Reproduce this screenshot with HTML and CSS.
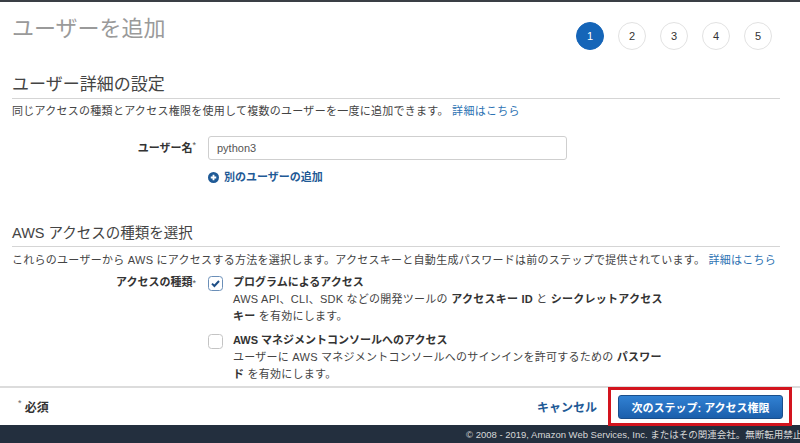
FILE: index.html
```html
<!DOCTYPE html>
<html lang="ja">
<head>
<meta charset="utf-8">
<title>ユーザーを追加</title>
<link rel="stylesheet" href="styles.css">
</head>
<body>
<div class="app">
  <div class="topbar"></div>
  <main class="main">
    <header class="header">
      <h1 class="title">ユーザーを追加</h1>
      <ol class="steps">
        <li class="step active">1</li>
        <li class="step">2</li>
        <li class="step">3</li>
        <li class="step">4</li>
        <li class="step">5</li>
      </ol>
    </header>

    <h2 class="section-title first">ユーザー詳細の設定</h2>
    <p class="desc">同じアクセスの種類とアクセス権限を使用して複数のユーザーを一度に追加できます。 <a class="link" href="#">詳細はこちら</a></p>

    <div class="form-row">
      <label class="label">ユーザー名<span class="req">*</span></label>
      <input class="input" type="text" value="python3">
    </div>
    <div class="add-user">
      <a class="add-link" href="#">
        <svg class="plus" viewBox="0 0 12 12" width="11" height="11"><circle cx="6" cy="6" r="6" fill="#1f5a96"/><path d="M6 3v6M3 6h6" stroke="#fff" stroke-width="2"/></svg>
        別のユーザーの追加
      </a>
    </div>

    <h2 class="section-title second">AWS アクセスの種類を選択</h2>
    <p class="desc desc2">これらのユーザーから AWS にアクセスする方法を選択します。アクセスキーと自動生成パスワードは前のステップで提供されています。 <a class="link" href="#">詳細はこちら</a></p>

    <div class="access-row">
      <div class="label label-access">アクセスの種類<span class="req">*</span></div>
      <div class="options">
        <div class="option">
          <span class="checkbox checked">
            <svg viewBox="0 0 15 15" width="15" height="15"><rect x="0.5" y="0.5" width="14" height="14" rx="3" fill="#fff" stroke="#6b8fb8"/><path d="M4 7.6l2.4 2.4 4.6-5" fill="none" stroke="#1f4f86" stroke-width="2"/></svg>
          </span>
          <div class="option-text">
            <div class="option-title">プログラムによるアクセス</div>
            <div class="option-desc">AWS API、CLI、SDK などの開発ツールの <b>アクセスキー ID</b> と <b>シークレットアクセス<br>キー</b> を有効にします。</div>
          </div>
        </div>
        <div class="option second-opt">
          <span class="checkbox">
            <svg viewBox="0 0 15 15" width="15" height="15"><rect x="0.5" y="0.5" width="14" height="14" rx="3" fill="#fff" stroke="#c4c4c4"/></svg>
          </span>
          <div class="option-text">
            <div class="option-title">AWS マネジメントコンソールへのアクセス</div>
            <div class="option-desc">ユーザーに AWS マネジメントコンソールへのサインインを許可するための <b>パスワー<br>ド</b> を有効にします。</div>
          </div>
        </div>
      </div>
    </div>
  </main>

  <footer class="actions">
    <div class="required"><span class="star">*</span> 必須</div>
    <div class="buttons">
      <a class="cancel" href="#">キャンセル</a>
      <span class="highlight">
        <button class="primary" type="button">次のステップ: アクセス権限</button>
      </span>
    </div>
  </footer>
  <div class="copyright">© 2008 - 2019, Amazon Web Services, Inc. またはその関連会社。無断転用禁止。</div>
</div>
</body>
</html>
```

FILE: styles.css
```css
* { box-sizing: border-box; }
html, body { margin: 0; padding: 0; }
body {
  font-family: "Liberation Sans", "Noto Sans CJK JP", sans-serif;
  font-size: 11px;
  color: #444;
  background: #fff;
}
.app {
  width: 800px;
  height: 443px;
  display: flex;
  flex-direction: column;
  overflow: hidden;
}
.topbar { height: 2px; background: #3a3f45; flex: none; }
.main {
  flex: 1;
  overflow: hidden;
  padding: 0 20px 0 12px;
}
.header {
  display: flex;
  justify-content: space-between;
  align-items: flex-start;
  height: 48px;
}
.title {
  margin: 14px 0 0;
  font-size: 22px;
  line-height: 26px;
  font-weight: 400;
  color: #9a9a9a;
}
.steps {
  list-style: none;
  margin: 20px 8px 0 0;
  padding: 0;
  display: flex;
  gap: 14px;
}
.step {
  width: 28px;
  height: 28px;
  border-radius: 50%;
  border: 1px solid #e2e2e2;
  display: flex;
  align-items: center;
  justify-content: center;
  font-size: 11px;
  color: #333;
  background: #fff;
}
.step.active {
  background: #1565b8;
  border-color: #1565b8;
  color: #fff;
}
.section-title {
  margin: 0;
  font-size: 17px;
  line-height: 20px;
  font-weight: 400;
  color: #444;
  padding-bottom: 3px;
  border-bottom: 1px solid #d5d5d5;
}
.section-title.first { margin-top: 25px; }
.section-title.second { margin-top: 36px; font-size: 14.5px; }
.desc {
  margin: 4px 0 0;
  line-height: 16px;
  white-space: nowrap;
  letter-spacing: 0.27px;
}
.desc2 { margin-top: 5px; }
.link { color: #2e73b3; text-decoration: none; }
.form-row {
  display: flex;
  align-items: center;
  gap: 12px;
  margin-top: 17px;
}
.label {
  width: 184px;
  flex: none;
  text-align: right;
  font-weight: 700;
  color: #333;
  line-height: 24px;
}
.req { font-weight: 400; font-size: 9px; vertical-align: top; line-height: 18px; color: #555; }
.input {
  width: 359px;
  height: 24px;
  border: 1px solid #cfcfcf;
  border-radius: 3px;
  padding: 0 8px;
  font-family: "Liberation Sans", "Noto Sans CJK JP", sans-serif;
  font-size: 11px;
  color: #555;
}
.add-user {
  margin-top: 9px;
  padding-left: 196px;
  line-height: 16px;
}
.add-link {
  color: #1f5a96;
  font-weight: 700;
  text-decoration: none;
  display: inline-flex;
  align-items: center;
  gap: 5px;
}
.plus { display: block; }
.access-row {
  display: flex;
  gap: 12px;
  margin-top: 6px;
}
.label-access { line-height: 17px; }
.options { display: flex; flex-direction: column; }
.option { display: flex; gap: 10px; }
.option.second-opt { margin-top: 7px; }
.checkbox { display: block; margin-top: 2px; height: 15px; flex: none; }
.checkbox svg { display: block; }
.option-text { line-height: 17px; white-space: nowrap; }
.option-title { font-weight: 700; color: #333; }
.option-desc { letter-spacing: 0.25px; }
.option-desc b { color: #333; }
.actions {
  flex: none;
  height: 39px;
  border-top: 2px solid #dcdcdc;
  display: flex;
  align-items: center;
  justify-content: space-between;
  padding: 0 17px 0 18px;
}
.required { font-weight: 700; color: #333; font-size: 12px; }
.star { font-weight: 400; font-size: 9px; color: #666; vertical-align: top; }
.buttons { display: flex; align-items: center; gap: 21px; }
.cancel {
  color: #1f5a96;
  font-weight: 700;
  font-size: 12px;
  text-decoration: none;
}
.highlight { position: relative; display: block; }
.highlight::after {
  content: "";
  position: absolute;
  top: -8px;
  bottom: -7px;
  left: -10px;
  right: -9px;
  border: 3px solid #d3141e;
  pointer-events: none;
}
.primary {
  display: block;
  width: 165px;
  height: 24px;
  border: 1px solid #1a4f8c;
  border-radius: 3px;
  background: linear-gradient(#3181d3, #1b5fac);
  color: #fff;
  font-family: "Liberation Sans", "Noto Sans CJK JP", sans-serif;
  font-weight: 700;
  font-size: 11px;
  padding: 0;
}
.copyright {
  flex: none;
  height: 18px;
  background: #232f3e;
  color: #d8d8d8;
  font-size: 9.5px;
  line-height: 19px;
  white-space: nowrap;
  overflow: hidden;
  padding-left: 466px;
}
```
